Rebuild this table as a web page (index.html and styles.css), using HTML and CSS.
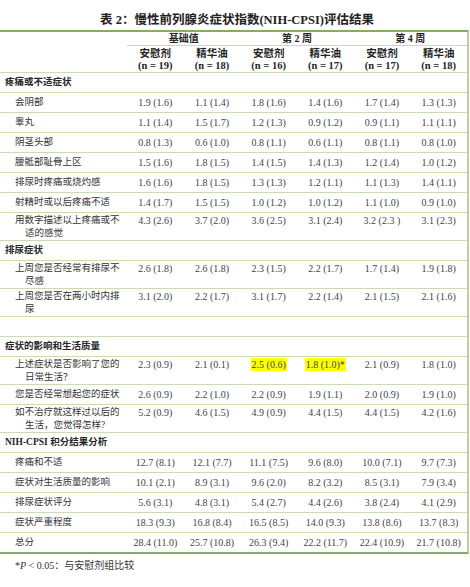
FILE: index.html
```html
<!DOCTYPE html>
<html lang="zh-CN">
<head>
<meta charset="utf-8">
<title>表 2</title>
<link rel="stylesheet" href="styles.css">
</head>
<body>
<div class="page">
  <h1 class="title">表 2：慢性前列腺炎症状指数(NIH-CPSI)评估结果</h1>
  <table class="tbl">
    <colgroup>
      <col class="c-label">
      <col class="c-num"><col class="c-num"><col class="c-num"><col class="c-num"><col class="c-num"><col class="c-num">
    </colgroup>
    <thead>
      <tr class="grp">
        <th class="blank"></th>
        <th colspan="2">基础值</th>
        <th colspan="2">第 2 周</th>
        <th colspan="2">第 4 周</th>
      </tr>
      <tr class="sub">
        <th class="blank"></th>
        <th>安慰剂<br><span class="n">(n = 19)</span></th>
        <th>精华油<br><span class="n">(n = 18)</span></th>
        <th>安慰剂<br><span class="n">(n = 16)</span></th>
        <th>精华油<br><span class="n">(n = 17)</span></th>
        <th>安慰剂<br><span class="n">(n = 17)</span></th>
        <th>精华油<br><span class="n">(n = 18)</span></th>
      </tr>
    </thead>
    <tbody>
      <tr class="sec"><td class="slbl">疼痛或不适症状</td><td colspan="6"></td></tr>
      <tr><td class="lbl">会阴部</td><td>1.9 (1.6)</td><td>1.1 (1.4)</td><td>1.8 (1.6)</td><td>1.4 (1.6)</td><td>1.7 (1.4)</td><td>1.3 (1.3)</td></tr>
      <tr><td class="lbl">睾丸</td><td>1.1 (1.4)</td><td>1.5 (1.7)</td><td>1.2 (1.3)</td><td>0.9 (1.2)</td><td>0.9 (1.1)</td><td>1.1 (1.1)</td></tr>
      <tr><td class="lbl">阴茎头部</td><td>0.8 (1.3)</td><td>0.6 (1.0)</td><td>0.8 (1.1)</td><td>0.6 (1.1)</td><td>0.8 (1.1)</td><td>0.8 (1.0)</td></tr>
      <tr><td class="lbl">腰骶部耻骨上区</td><td>1.5 (1.6)</td><td>1.8 (1.5)</td><td>1.4 (1.5)</td><td>1.4 (1.3)</td><td>1.2 (1.4)</td><td>1.0 (1.2)</td></tr>
      <tr><td class="lbl">排尿时疼痛或烧灼感</td><td>1.6 (1.6)</td><td>1.8 (1.5)</td><td>1.3 (1.3)</td><td>1.2 (1.1)</td><td>1.1 (1.3)</td><td>1.4 (1.1)</td></tr>
      <tr><td class="lbl">射精时或以后疼痛不适</td><td>1.4 (1.7)</td><td>1.5 (1.5)</td><td>1.0 (1.2)</td><td>1.0 (1.2)</td><td>1.1 (1.0)</td><td>0.9 (1.0)</td></tr>
      <tr class="two"><td class="lbl">用数字描述以上疼痛或不<br>适的感觉</td><td>4.3 (2.6)</td><td>3.7 (2.0)</td><td>3.6 (2.5)</td><td>3.1 (2.4)</td><td>3.2 (2.3 )</td><td>3.1 (2.3)</td></tr>
      <tr class="sec"><td class="slbl">排尿症状</td><td colspan="6"></td></tr>
      <tr class="two"><td class="lbl">上周您是否经常有排尿不<br>尽感</td><td>2.6 (1.8)</td><td>2.6 (1.8)</td><td>2.3 (1.5)</td><td>2.2 (1.7)</td><td>1.7 (1.4)</td><td>1.9 (1.8)</td></tr>
      <tr class="two"><td class="lbl">上周您是否在两小时内排<br>尿</td><td>3.1 (2.0)</td><td>2.2 (1.7)</td><td>3.1 (1.7)</td><td>2.2 (1.4)</td><td>2.1 (1.5)</td><td>2.1 (1.6)</td></tr>
      <tr class="empty"><td colspan="7"></td></tr>
      <tr class="sec"><td class="slbl">症状的影响和生活质量</td><td colspan="6"></td></tr>
      <tr class="two"><td class="lbl">上述症状是否影响了您的<br>日常生活？</td><td>2.3 (0.9)</td><td>2.1 (0.1)</td><td><span class="hl">2.5 (0.6)</span></td><td><span class="hl">1.8 (1.0)*</span></td><td>2.1 (0.9)</td><td>1.8 (1.0)</td></tr>
      <tr><td class="lbl">您是否经常想起您的症状</td><td>2.6 (0.9)</td><td>2.2 (1.0)</td><td>2.2 (0.9)</td><td>1.9 (1.1)</td><td>2.0 (0.9)</td><td>1.9 (1.0)</td></tr>
      <tr class="two"><td class="lbl">如不治疗就这样过以后的<br>生活，您觉得怎样?</td><td>5.2 (0.9)</td><td>4.6 (1.5)</td><td>4.9 (0.9)</td><td>4.4 (1.5)</td><td>4.4 (1.5)</td><td>4.2 (1.6)</td></tr>
      <tr class="sec"><td class="slbl">NIH-CPSI 积分结果分析</td><td colspan="6"></td></tr>
      <tr><td class="lbl">疼痛和不适</td><td>12.7 (8.1)</td><td>12.1 (7.7)</td><td>11.1 (7.5)</td><td>9.6 (8.0)</td><td>10.0 (7.1)</td><td>9.7 (7.3)</td></tr>
      <tr><td class="lbl">症状对生活质量的影响</td><td>10.1 (2.1)</td><td>8.9 (3.1)</td><td>9.6 (2.0)</td><td>8.2 (3.2)</td><td>8.5 (3.1)</td><td>7.9 (3.4)</td></tr>
      <tr><td class="lbl">排尿症状评分</td><td>5.6 (3.1)</td><td>4.8 (3.1)</td><td>5.4 (2.7)</td><td>4.4 (2.6)</td><td>3.8 (2.4)</td><td>4.1 (2.9)</td></tr>
      <tr><td class="lbl">症状严重程度</td><td>18.3 (9.3)</td><td>16.8 (8.4)</td><td>16.5 (8.5)</td><td>14.0 (9.3)</td><td>13.8 (8.6)</td><td>13.7 (8.3)</td></tr>
      <tr class="last"><td class="lbl">总分</td><td>28.4 (11.0)</td><td>25.7 (10.8)</td><td>26.3 (9.4)</td><td>22.2 (11.7)</td><td>22.4 (10.9)</td><td>21.7 (10.8)</td></tr>
    </tbody>
  </table>
  <p class="note">*<i>P</i> &lt; 0.05：与安慰剂组比较</p>
</div>
</body>
</html>
```

FILE: styles.css
```css
html, body {
  margin: 0;
  padding: 0;
  background: #ffffff;
}

.page {
  width: 470px;
  font-family: "Liberation Serif", "Noto Sans CJK SC", sans-serif;
  color: #333333;
}

.title {
  margin: 0;
  padding: 13px 0 3px 100px;
  font-size: 12.5px;
  line-height: 14px;
  font-weight: bold;
  color: #222222;
  white-space: nowrap;
}

.tbl {
  width: 469px;
  table-layout: fixed;
  border-collapse: separate;
  border-spacing: 0;
  border-top: 2px solid #86ad5f;
  border-bottom: 2px solid #86ad5f;
  border-right: 2px solid #b9d19d;
}

.c-label { width: 127px; }

.tbl th,
.tbl td {
  padding: 0;
  border-bottom: 1px solid #c9dcb3;
  text-align: center;
  vertical-align: middle;
  white-space: nowrap;
}

.tbl tr.last td { border-bottom: none; }

.tbl th {
  font-weight: bold;
  color: #262626;
}

.grp { height: 13px; }
.grp th {
  font-size: 10px;
  line-height: 12px;
  padding-top: 1px;
}
.grp th.blank { border-bottom: none; }

.sub { height: 27px; }
.sub th {
  font-size: 10.5px;
  line-height: 12px;
  padding-top: 1px;
}
.sub .n { font-size: 10.5px; }

.tbl td {
  font-size: 10px;
  line-height: 13px;
  color: #444444;
  height: 19px;
}

.tbl tr.two td {
  vertical-align: top;
  padding-top: 1px;
  height: auto;
}

.tbl td.lbl {
  text-align: left;
  font-size: 9.5px;
  color: #333333;
  padding-left: 25px;
  text-indent: -10px;
}

.tbl td.slbl {
  text-align: left;
  font-size: 9.5px;
  font-weight: bold;
  color: #262626;
  padding-left: 5px;
}

.hl {
  background: #ffff00;
  padding: 1px 1px;
}

.note {
  margin: 0;
  padding: 5px 0 0 15px;
  font-size: 10px;
  line-height: 14px;
  color: #333333;
}
```
